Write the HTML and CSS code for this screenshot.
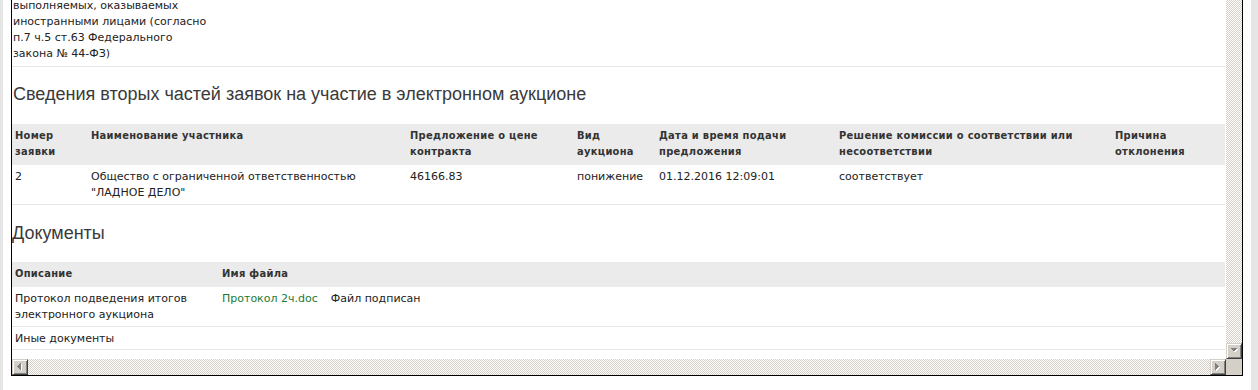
FILE: index.html
```html
<!DOCTYPE html>
<html lang="ru">
<head>
<meta charset="utf-8">
<title>Протокол</title>
<link rel="stylesheet" href="styles.css">
</head>
<body>
<div class="page">
  <div class="stripe-left"></div>
  <div class="frame">
    <div class="viewport">
      <div class="prev-row">выполняемых, оказываемых<br>иностранными лицами (согласно<br>п.7 ч.5 ст.63 Федерального<br>закона № 44-ФЗ)</div>

      <h2 class="section-title">Сведения вторых частей заявок на участие в электронном аукционе</h2>
      <table class="grid bids">
        <colgroup>
          <col class="c1"><col class="c2"><col class="c3"><col class="c4"><col class="c5"><col class="c6"><col class="c7">
        </colgroup>
        <thead>
          <tr>
            <th>Номер заявки</th>
            <th>Наименование участника</th>
            <th>Предложение о цене контракта</th>
            <th>Вид аукциона</th>
            <th>Дата и время подачи предложения</th>
            <th>Решение комиссии о соответствии или несоответствии</th>
            <th>Причина отклонения</th>
          </tr>
        </thead>
        <tbody>
          <tr>
            <td>2</td>
            <td>Общество с ограниченной ответственностью "ЛАДНОЕ ДЕЛО"</td>
            <td>46166.83</td>
            <td>понижение</td>
            <td>01.12.2016 12:09:01</td>
            <td>соответствует</td>
            <td></td>
          </tr>
        </tbody>
      </table>

      <h2 class="section-title docs-title">Документы</h2>
      <table class="grid docs">
        <colgroup>
          <col class="d1"><col class="d2">
        </colgroup>
        <thead>
          <tr>
            <th>Описание</th>
            <th>Имя файла</th>
          </tr>
        </thead>
        <tbody>
          <tr>
            <td>Протокол подведения итогов электронного аукциона</td>
            <td><a class="file-link" href="#">Протокол 2ч.doc</a><span class="signed">Файл подписан</span></td>
          </tr>
          <tr class="last">
            <td>Иные документы</td>
            <td></td>
          </tr>
        </tbody>
      </table>
    </div>

    <div class="vscroll">
      <div class="track"></div>
      <div class="sbtn">
        <svg width="9" height="6" viewBox="0 0 9 6" shape-rendering="crispEdges"><polygon points="1,1 8,1 4.5,4.5" fill="#fff"/><polygon points="0,0 7,0 3.5,3.5" fill="#808080"/></svg>
      </div>
    </div>

    <div class="hscroll">
      <div class="sbtn">
        <svg width="6" height="9" viewBox="0 0 6 9" shape-rendering="crispEdges"><polygon points="4.5,1 4.5,8 1,4.5" fill="#fff"/><polygon points="3.5,0 3.5,7 0,3.5" fill="#808080"/></svg>
      </div>
      <div class="track"></div>
      <div class="sbtn">
        <svg width="6" height="9" viewBox="0 0 6 9" shape-rendering="crispEdges"><polygon points="1,1 1,8 4.5,4.5" fill="#fff"/><polygon points="0,0 0,7 3.5,3.5" fill="#808080"/></svg>
      </div>
    </div>

    <div class="corner"></div>
  </div>
  <div class="stripe-right"></div>
</div>
</body>
</html>
```

FILE: styles.css
```css
html, body {
  margin: 0;
  padding: 0;
  background: #fff;
  overflow: hidden;
}

body {
  font-family: "DejaVu Sans", Verdana, sans-serif;
  font-size: 11px;
  color: #222;
}

.page {
  display: flex;
  height: 390px;
}

.stripe-left {
  flex: none;
  width: 3px;
  background: #e6e6e6;
  margin-right: 8px;
}

.stripe-right {
  flex: none;
  width: 7px;
  margin-left: 8px;
  background: #e6e6e6;
}

.frame {
  flex: none;
  display: grid;
  grid-template-columns: 1214px 16px;
  grid-template-rows: 359px 16px;
  border: 1px solid #000;
  border-top: 0;
  align-self: flex-start;
}

.viewport {
  overflow: hidden;
  background: #fff;
}

.prev-row {
  margin-top: -2px;
  padding: 0 0 4px 1px;
  line-height: 16px;
  border-bottom: 1px solid #e6e6e6;
}

.section-title {
  font-family: "Liberation Sans", Arial, sans-serif;
  font-size: 18px;
  font-weight: normal;
  line-height: 21px;
  color: #3a3a3a;
  margin: 17px 0 19px;
  padding-left: 1px;
}

.docs-title {
  margin: 18px 0 18px;
  padding-left: 0;
}

.grid {
  border-collapse: collapse;
  table-layout: fixed;
  width: 1213px;
}

.grid th {
  background: #ebebeb;
  text-align: left;
  vertical-align: top;
  font-family: "DejaVu Sans Condensed", "DejaVu Sans", sans-serif;
  font-weight: bold;
  font-size: 11px;
  letter-spacing: 0.3px;
  color: #333;
  line-height: 16px;
  padding: 4px 3px 5px;
}

.grid td {
  vertical-align: top;
  line-height: 16px;
  padding: 4px 3px 3px;
  border-bottom: 1px solid #e6e6e6;
}

.grid tr.last td {
  padding-bottom: 2px;
}

.bids .c1 { width: 76px; }
.bids .c2 { width: 319px; }
.bids .c3 { width: 167px; }
.bids .c4 { width: 82px; }
.bids .c5 { width: 180px; }
.bids .c6 { width: 276px; }
.bids .c7 { width: 113px; }

.docs .d1 { width: 207px; }
.docs .d2 { width: 1006px; }

.file-link {
  color: #1d7a33;
  text-decoration: none;
}

.signed {
  margin-left: 13px;
}

.vscroll {
  display: flex;
  flex-direction: column;
}

.hscroll {
  display: flex;
}

.track {
  flex: 1;
  background: repeating-conic-gradient(#d4d0c8 0 25%, #fff 0 50%) 0 0 / 2px 2px;
}

.sbtn {
  flex: none;
  box-sizing: border-box;
  width: 16px;
  height: 16px;
  background: #d4d0c8;
  border: 1px solid;
  border-color: #d4d0c8 #404040 #404040 #d4d0c8;
  box-shadow: inset 1px 1px #fff, inset -1px -1px #808080;
  display: flex;
  align-items: center;
  justify-content: center;
}

.sbtn svg {
  display: block;
}

.corner {
  background: #d4d0c8;
}
```
